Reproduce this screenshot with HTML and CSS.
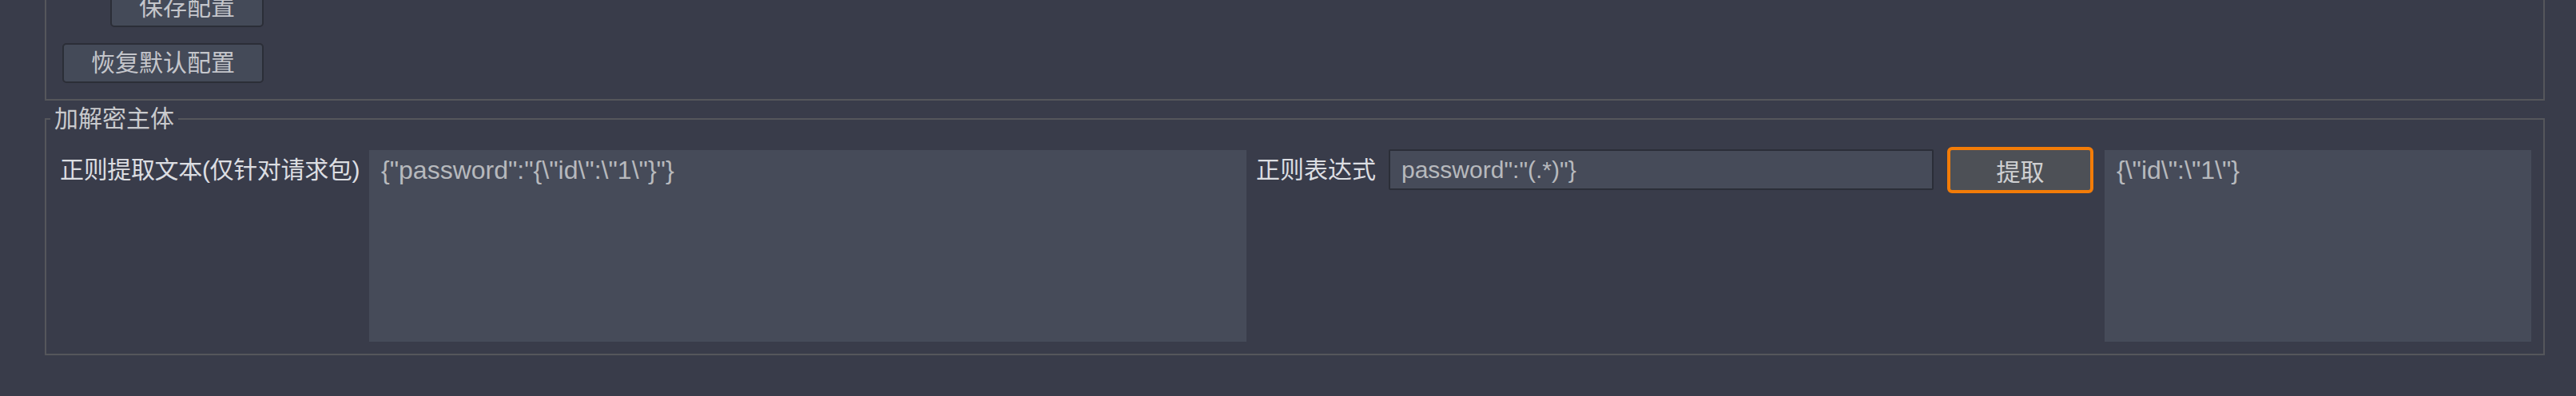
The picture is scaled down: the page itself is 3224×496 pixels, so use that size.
FILE: index.html
```html
<!DOCTYPE html>
<html lang="zh">
<head>
    <meta charset="UTF-8">
    <title>加解密配置</title>
    <link rel="stylesheet" href="styles.css">
</head>
<body>

<div class="panel">
    <div class="config-box">
        <div class="btn-col">
            <button class="btn">保存配置</button>
            <button class="btn">恢复默认配置</button>
        </div>
    </div>

    <fieldset class="crypto-box">
        <legend>加解密主体</legend>
        <div class="row">
            <label class="lbl lbl-long">正则提取文本(仅针对请求包)</label>
            <textarea class="area area-req" spellcheck="false">{"password":"{\"id\":\"1\"}"}</textarea>
            <label class="lbl lbl-regex">正则表达式</label>
            <input class="regex-input" type="text" value='password":"(.*)"}'>
            <button class="btn-extract">提取</button>
            <textarea class="area area-resp" spellcheck="false">{\"id\":\"1\"}</textarea>
        </div>
    </fieldset>
</div>

</body>
</html>
```

FILE: styles.css
```css
body {
    margin: 0;
    height: 100vh;
    overflow: hidden;
    background-color: #393c4a;
    color: #d6d8dd;
    font-family: "Liberation Sans", "Noto Sans CJK SC", sans-serif;
    font-size: 30px;
}

.panel {
    padding: 0 39px 0 56px;
}

/* upper group, its top edge is scrolled away */
.config-box {
    margin-top: -36px;
    padding: 18px 0 20px 20px;
    border: 2px solid #55565b;
}

.btn-col {
    display: inline-flex;
    flex-direction: column;
    align-items: flex-end;
    gap: 20px;
}

.btn {
    height: 50px;
    padding: 0 34px;
    background-color: #444a58;
    border: 2px solid #2b2e37;
    border-radius: 5px;
    color: #c4c6cb;
    font-family: inherit;
    font-size: 30px;
    line-height: 46px;
}

.crypto-box {
    margin: 7px 0 0 0;
    padding: 0;
    border: 2px solid #55565b;
}

.crypto-box legend {
    margin-left: 5px;
    padding: 0 5px;
    line-height: 32px;
    color: #c9cacd;
}

.row {
    display: flex;
    align-items: flex-start;
    padding: 23px 15px 15px 17px;
}

.lbl {
    padding-top: 9px;
    line-height: 32px;
    white-space: nowrap;
    color: #dcdee2;
}

.lbl-long {
    width: 375px;
    margin-right: 12px;
    letter-spacing: -0.35px;
}

.lbl-regex {
    width: 149px;
    margin: 0 17px 0 12px;
}

.area {
    box-sizing: border-box;
    height: 240px;
    margin: 0;
    padding: 7px 15px;
    border: none;
    outline: none;
    resize: none;
    overflow: hidden;
    background-color: #464b59;
    color: #b7b9bd;
    font-family: "Liberation Sans", sans-serif;
    font-size: 32px;
    line-height: 36px;
}

.area-req {
    width: 1098px;
}

.area-resp {
    flex: 1;
    margin-left: 14px;
}

.regex-input {
    box-sizing: border-box;
    width: 682px;
    height: 51px;
    margin: -1px 0 0 0;
    padding: 0 14px;
    border: 2px solid #2b2e38;
    border-radius: 2px;
    outline: none;
    background-color: #464b59;
    color: #b7b9bd;
    font-family: "Liberation Sans", sans-serif;
    font-size: 30px;
}

.btn-extract {
    box-sizing: border-box;
    width: 183px;
    height: 58px;
    margin: -4px 0 0 17px;
    border: 4px solid #f37c08;
    border-radius: 6px;
    background-color: #4d5056;
    color: #cfd0d2;
    font-family: "Liberation Sans", "Noto Sans CJK SC", sans-serif;
    font-size: 30px;
}
```
